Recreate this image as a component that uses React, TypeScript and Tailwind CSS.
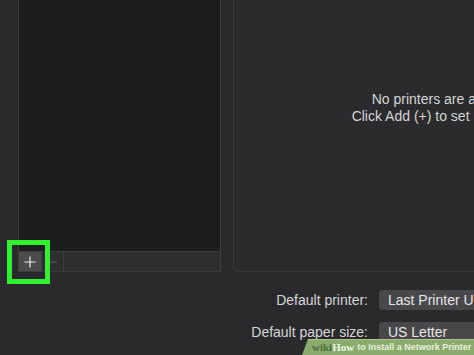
import React from 'react';

const font = { fontFamily: '"Liberation Sans", Arial, sans-serif' };

const rows = [
  { label: 'Default printer:', value: 'Last Printer Used' },
  { label: 'Default paper size:', value: 'US Letter' },
];

const App: React.FC = () => {
  return (
    <div className="relative w-[474px] h-[355px] overflow-hidden bg-[#2a2a2c]" style={font}>
      {/* top area: printer list + detail panel */}
      <div className="flex h-[272px]">
        <div className="w-[18px] flex-none" />
        <div className="flex w-[203px] flex-none flex-col border-x border-[#3e3e40]">
          <div className="flex-1 bg-[#1c1d1f]" />
          <div className="flex h-[21px] items-stretch border-y border-[#3c3c3e] bg-[#2e2e30]">
            <div className="flex w-[22px] items-center justify-center bg-[#4b4b4d]">
              <svg width="12" height="12" viewBox="0 0 12 12">
                <path d="M6 0.5V11.5M0.5 6H11.5" stroke="#ececec" strokeWidth="1.2" />
              </svg>
            </div>
            <div className="w-px bg-[#3e3e40]" />
            <div className="flex w-[21px] items-center justify-center">
              <svg width="9" height="2" viewBox="0 0 9 2">
                <path d="M0 1H9" stroke="#5c5c5e" strokeWidth="1" />
              </svg>
            </div>
            <div className="w-px bg-[#3e3e40]" />
          </div>
        </div>
        <div className="w-[12px] flex-none" />
        <div className="flex w-[432px] flex-none flex-col items-center justify-center rounded-bl-md border-b border-l border-[#3a3a3c] bg-[#2b2b2d] pb-[56px] text-[14px] leading-[17px] text-[#d4d4d4]">
          <p className="whitespace-nowrap">No printers are available.</p>
          <p className="whitespace-nowrap">Click Add (+) to set up a printer.</p>
        </div>
      </div>

      {/* defaults form */}
      <div className="mt-[18px] grid grid-cols-[368px_auto] gap-x-[11px] gap-y-[12px] text-[14px] text-[#d6d6d6]">
        {rows.map((r) => (
          <React.Fragment key={r.label}>
            <div className="flex h-[20px] items-center justify-end whitespace-nowrap">{r.label}</div>
            <div className="flex h-[20px] w-[200px] items-center whitespace-nowrap rounded-[4px] bg-[#48484a] px-[9px] text-[#e6e6e6]">
              {r.value}
            </div>
          </React.Fragment>
        ))}
      </div>

      {/* highlight box around add button */}
      <div className="absolute left-[7px] top-[240px] h-[44px] w-[43px] border-[5px] border-[#30f030]" />

      {/* watermark */}
      <div
        className="absolute bottom-0 right-0 flex h-[16px] w-[172px] items-center whitespace-nowrap border-t border-[#a8c48e] bg-[#8aab6c] pl-[10px] text-[9px] font-bold"
        style={{ clipPath: 'polygon(6px 0, 100% 0, 100% 100%, 0 100%)' }}
      >
        <span className="text-[11px] text-[#4e6a3c]" style={{ fontFamily: '"Liberation Serif", serif' }}>wiki</span>
        <span className="text-[11px] text-[#eef4e6]" style={{ fontFamily: '"Liberation Serif", serif' }}>How</span>
        <span className="ml-[3px] text-[#e8f0de]">to Install a Network Printer</span>
      </div>
    </div>
  );
};

export default App;
